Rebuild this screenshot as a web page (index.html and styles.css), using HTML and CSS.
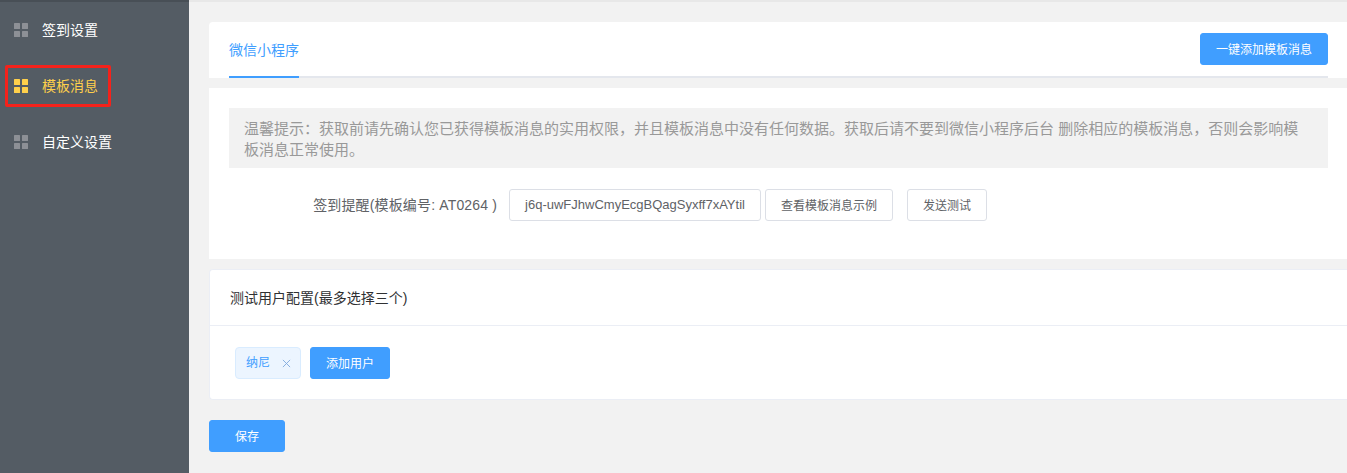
FILE: index.html
```html
<!DOCTYPE html>
<html lang="zh">
<head>
<meta charset="utf-8">
<title>模板消息</title>
<link rel="stylesheet" href="styles.css">
</head>
<body>
<div class="app">
  <nav class="side">
    <div class="item"><svg class="ico" viewBox="0 0 14 14"><rect width="6" height="6" rx=".5"/><rect x="8" width="6" height="6" rx=".5"/><rect y="8" width="6" height="6" rx=".5"/><rect x="8" y="8" width="6" height="6" rx=".5"/></svg><span>签到设置</span></div>
    <div class="item active"><svg class="ico" viewBox="0 0 14 14"><rect width="6" height="6" rx=".5"/><rect x="8" width="6" height="6" rx=".5"/><rect y="8" width="6" height="6" rx=".5"/><rect x="8" y="8" width="6" height="6" rx=".5"/></svg><span>模板消息</span></div>
    <div class="item"><svg class="ico" viewBox="0 0 14 14"><rect width="6" height="6" rx=".5"/><rect x="8" width="6" height="6" rx=".5"/><rect y="8" width="6" height="6" rx=".5"/><rect x="8" y="8" width="6" height="6" rx=".5"/></svg><span>自定义设置</span></div>
  </nav>
  <main class="main">
    <section class="tabs">
      <div class="tabbar">
        <div class="tab">微信小程序</div>
        <button class="btn primary add-all"><span>一键添加模板消息</span></button>
      </div>
    </section>
    <section class="panel">
      <div class="tip">温馨提示：获取前请先确认您已获得模板消息的实用权限，并且模板消息中没有任何数据。获取后请不要到微信小程序后台 删除相应的模板消息，否则会影响模板消息正常使用。</div>
      <div class="row">
        <label class="lab">签到提醒(模板编号: AT0264 )</label>
        <div class="field">j6q-uwFJhwCmyEcgBQagSyxff7xAYtil</div>
        <button class="btn plain example">查看模板消息示例</button>
        <button class="btn plain test">发送测试</button>
      </div>
    </section>
    <section class="card">
      <div class="card-head">测试用户配置(最多选择三个)</div>
      <div class="card-body">
        <span class="tag"><span class="tag-text">纳尼</span><svg class="x" viewBox="0 0 10 10"><path d="M1 1l8 8M9 1l-8 8"/></svg></span>
        <button class="btn primary add-user">添加用户</button>
      </div>
    </section>
    <button class="btn primary save">保存</button>
  </main>
</div>
</body>
</html>
```
FILE: styles.css
```css
*, *::after { box-sizing: border-box; }
html, body { margin: 0; height: 473px; overflow: hidden; }
body { font-family: "Liberation Sans", "Noto Sans CJK SC", sans-serif; font-size: 14px; color: #606266; background: #f2f2f2; }
.app { display: flex; height: 473px; }
.side { width: 189px; flex: none; background: #545c64; border-top: 2px solid #484f56; }
.item { height: 56px; display: flex; align-items: center; padding-left: 14px; color: #fff; position: relative; font-size: 14px; }
.item span { margin: 0 0 2px 13px; }
.ico { width: 14px; height: 14px; fill: #8d9096; flex: none; margin-right: 1px; }
.active { color: #ffd04b; }
.active .ico { fill: #ffd04b; }
.active::after { content: ""; position: absolute; left: 5px; top: 7px; width: 106px; height: 42px; border: 3px solid #f5221b; border-radius: 2px; }
.main { flex: 1; min-width: 0; border-top: 2px solid #e8e8e8; padding: 20px 0 0 20px; }
.tabs { background: #fff; height: 56px; padding: 0 19px 0 20px; border-radius: 4px 0 0 0; }
.tabbar { height: 56px; display: flex; justify-content: space-between; border-bottom: 2px solid #e4e7ed; }
.tab { width: 70px; height: 56px; line-height: 56px; font-size: 14px; color: #409eff; border-bottom: 2px solid #409eff; white-space: nowrap; }
.btn { font: inherit; font-size: 12px; border-radius: 3px; cursor: pointer; white-space: nowrap; padding: 0 0 2px; }
.primary { background: #409eff; border: 1px solid #409eff; color: #fff; }
.plain { background: #fff; border: 1px solid #dcdfe6; color: #606266; }
.add-all { width: 128px; height: 32px; margin-top: 11px; }
.panel { background: #fff; height: 171px; margin-top: 10px; padding: 20px 19px 0 20px; }
.tip { background: #f2f2f2; height: 60px; padding: 10px 16px 0 15px; color: #999; font-size: 15px; line-height: 21px; }
.row { display: flex; align-items: center; margin-top: 21px; height: 32px; }
.lab { width: 280px; flex: none; text-align: right; padding: 0 12px 2px 0; font-size: 14px; letter-spacing: .15px; color: #606266; white-space: nowrap; }
.field { width: 252px; height: 32px; flex: none; border: 1px solid #dcdfe6; border-radius: 3px; line-height: 30px; text-align: center; font-size: 13px; color: #606266; white-space: nowrap; }
.example { width: 128px; height: 32px; margin-left: 4px; }
.test { width: 80px; height: 32px; margin-left: 14px; }
.card { background: #fff; height: 131px; margin-top: 10px; border: 1px solid #ebeef5; border-right: 0; border-radius: 4px 0 0 4px; }
.card-head { height: 56px; line-height: 56px; padding-left: 20px; border-bottom: 1px solid #ebeef5; color: #303133; font-size: 14px; white-space: nowrap; }
.card-body { display: flex; align-items: center; padding: 21px 0 0 25px; }
.tag { width: 66px; height: 32px; display: flex; align-items: center; padding-left: 10px; background: #ecf5ff; border: 1px solid #d9ecff; border-radius: 4px; color: #409eff; font-size: 12px; }
.tag-text { margin-bottom: 3px; }
.x { width: 9px; height: 9px; margin-left: 12px; fill: none; stroke: #7fa8dc; stroke-width: 1; }
.add-user { width: 80px; height: 32px; margin-left: 9px; }
.save { display: block; width: 76px; height: 32px; margin-top: 20px; }
```
